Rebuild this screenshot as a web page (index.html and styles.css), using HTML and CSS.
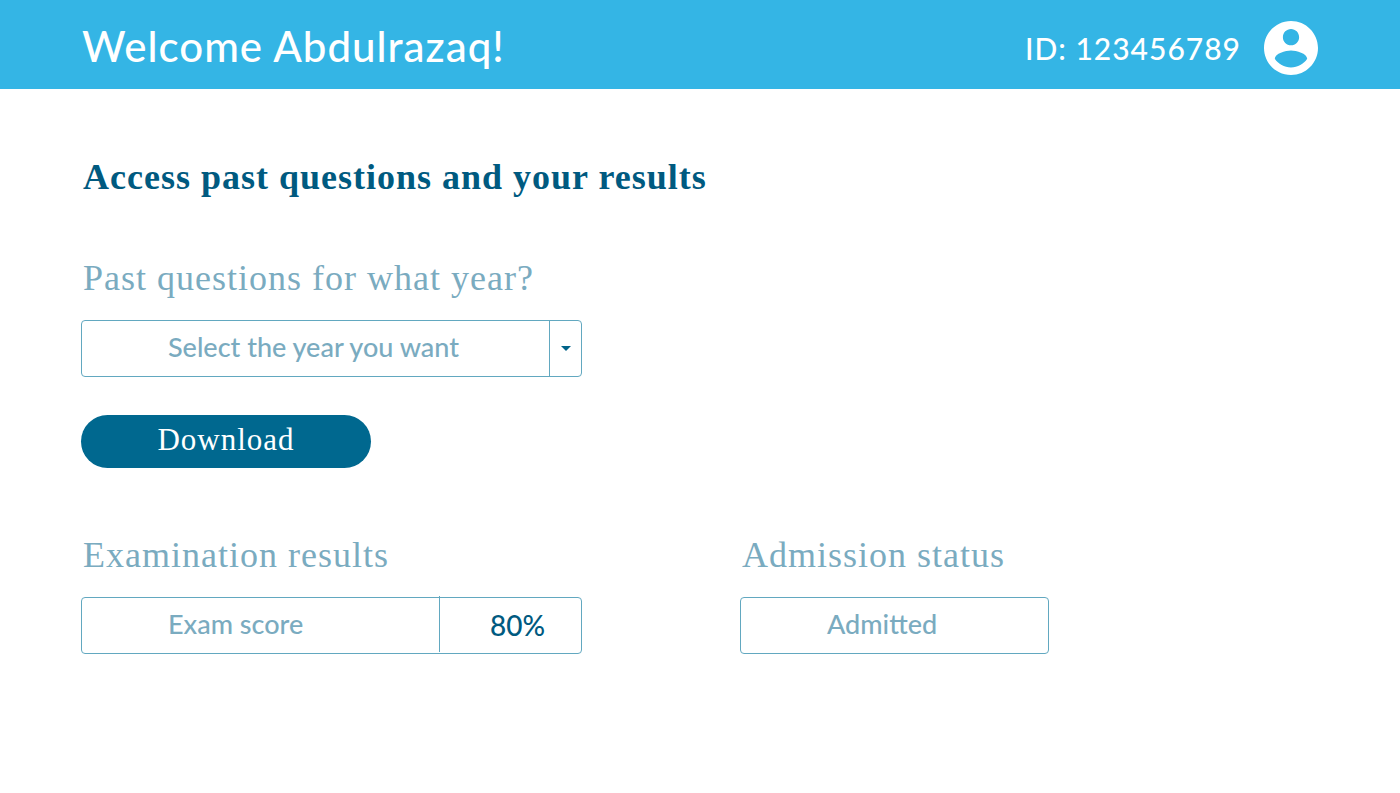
FILE: index.html
```
<!DOCTYPE html>
<html lang="en">
<head>
<meta charset="utf-8">
<meta name="viewport" content="width=device-width, initial-scale=1">
<title>Student dashboard</title>
<link rel="stylesheet" href="styles.css">
</head>
<body>
<header class="topbar">
  <p class="welcome">Welcome Abdulrazaq!</p>
  <div class="account">
    <span class="account-id">ID: 123456789</span>
    <svg class="avatar" viewBox="2 2 20 20" role="img" aria-label="Profile"><path fill="currentColor" d="M12 2C6.480 2 2 6.480 2 12s4.480 10 10 10 10-4.480 10-10S17.520 2 12 2zm0 3c1.660 0 3 1.340 3 3s-1.340 3-3 3-3-1.340-3-3 1.340-3 3-3zm0 14.200c-2.500 0-4.710-1.280-6-3.220.030-1.990 4-3.080 6-3.080 1.990 0 5.970 1.090 6 3.080-1.290 1.940-3.500 3.220-6 3.220z"/></svg>
  </div>
</header>
<main class="content">
  <h1 class="title">Access past questions and your results</h1>
  <form class="questions">
    <label class="heading" for="year">Past questions for what year?</label>
    <div class="year-box">
      <select class="year" id="year"><option>Select the year you want</option></select>
      <span class="arrow"><svg class="caret" viewBox="0 0 10 5" aria-hidden="true"><path fill="currentColor" d="M0 0h10L5 5z"/></svg></span>
    </div>
    <button class="download" type="button">Download</button>
  </form>
  <div class="results">
    <section class="exam">
      <h2 class="heading">Examination results</h2>
      <div class="box"><span class="box-text">Exam score</span><span class="score">80%</span></div>
    </section>
    <section class="admission">
      <h2 class="heading">Admission status</h2>
      <div class="box"><span class="box-text">Admitted</span></div>
    </section>
  </div>
</main>
</body>
</html>
```
FILE: styles.css
```
* { box-sizing: border-box; }
body { margin: 0; background: #fff; color: #005a80; font-family: Lato, sans-serif; font-weight: 500; }
.topbar { display: flex; align-items: flex-start; justify-content: space-between; padding: 15px 82px 11px; background: #34b5e5; color: #fff; }
.welcome { margin: 0; font-size: 42px; line-height: 62px; letter-spacing: 1px; }
.account { display: flex; align-items: center; gap: 23px; padding-top: 3px; }
.account-id { font-size: 30px; line-height: 60px; letter-spacing: 1px; }
.avatar { width: 54px; height: 54px; }
.content { padding: 64px 81px; }
.title, .heading { display: block; margin: 0; padding-left: 2px; font-family: "Liberation Serif", serif; font-size: 36px; letter-spacing: 1px; line-height: 48px; }
.title { font-weight: 700; }
.heading { color: #7aabc0; font-weight: 400; }
.questions { margin-top: 53px; }
.year-box { position: relative; max-width: 501px; margin-top: 18px; }
.year { display: block; width: 100%; height: 57px; padding: 0 32px 4px 86px; border: 1px solid #62a8c0; border-radius: 4px; background: #fff; color: #7aabc0; font: 500 27px Lato, sans-serif; appearance: none; }
.arrow { position: absolute; top: 0; right: 0; bottom: 0; width: 33px; display: grid; place-items: center; border-left: 1px solid #62a8c0; color: #006388; pointer-events: none; }
.caret { width: 10px; height: 5px; }
.download { display: block; width: 290px; height: 53px; margin-top: 38px; padding: 0 0 3px; border: 0; border-radius: 27px; background: #00688f; color: #fff; font: 31px "Liberation Serif", serif; letter-spacing: 1px; }
.results { display: flex; flex-wrap: wrap; gap: 48px 158px; margin-top: 63px; }
.exam { flex: 0 1 501px; }
.admission { flex: 0 1 309px; }
.box { display: flex; height: 57px; margin-top: 18px; border: 1px solid #62a8c0; border-radius: 4px; }
.box-text { flex: 1; padding-left: 86px; font-size: 27px; line-height: 52px; color: #7aabc0; }
.score { width: 142px; margin: -2px 0 1px; padding-left: 50px; border-left: 1px solid #62a8c0; font-size: 28px; line-height: 59px; }
```
